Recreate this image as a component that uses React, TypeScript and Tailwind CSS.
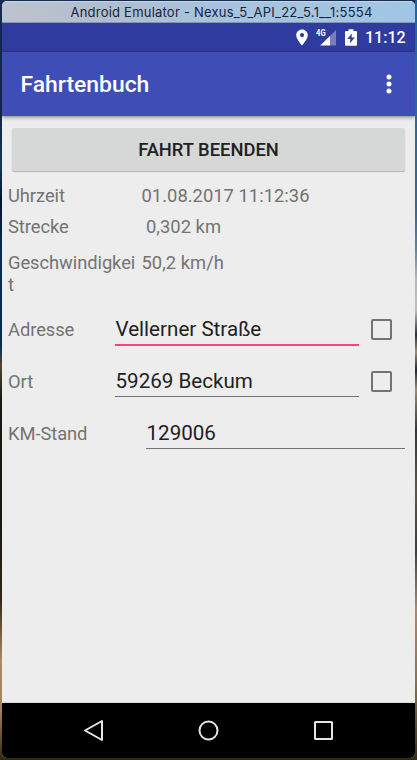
import React from "react";

function StatusIcons() {
  return (
    <>
      <svg className="mr-[8px] h-[17px] w-3" viewBox="0 0 12 17">
        <path
          fillRule="evenodd"
          fill="#fff"
          d="M6 0.4C2.8 0.4 0.2 2.9 0.2 6.1C0.2 10.3 6 16.6 6 16.6S11.8 10.3 11.8 6.1C11.8 2.9 9.2 0.4 6 0.4ZM6 4a2.1 2.1 0 1 1 0 4.2a2.1 2.1 0 0 1 0-4.2Z"
        />
      </svg>
      <span className="relative mr-[9px] h-[17px] w-5">
        <span className="absolute left-0 top-0 origin-left scale-x-[0.85] text-[9px] font-bold leading-[9px]">4G</span>
        <svg className="h-[17px] w-5" viewBox="0 0 20 17">
          <path fill="#fff" fillOpacity="0.35" d="M20 1V16.5H14V7Z" />
          <path fill="#fff" d="M4.2 16.5L14 7V16.5Z" />
        </svg>
      </span>
      <svg className="mr-[8px] h-[17px] w-[12px]" viewBox="0 0 11 17" preserveAspectRatio="none">
        <path
          fillRule="evenodd"
          fill="#fff"
          d="M3.3 0.3H7.7V2H10Q11 2 11 3V15.7Q11 16.7 10 16.7H1Q0 16.7 0 15.7V3Q0 2 1 2H3.3ZM6.4 4.5L2 10H5L4.4 14.5L9 8.5H6Z"
        />
      </svg>
    </>
  );
}

function Checkbox() {
  return <span className="ml-3 h-[21px] w-[21px] rounded-[2px] border-2 border-[#737373]" />;
}

function InfoRow({ label, value, className, valueClass }: { label: string; value: string; className: string; valueClass: string }) {
  return (
    <div className={`flex pl-1.5 ${className}`}>
      <div className="w-[129px] break-all tracking-[-0.07px]">{label}</div>
      <div className={`whitespace-nowrap tracking-[0.03px] ${valueClass}`}>{value}</div>
    </div>
  );
}

function FieldRow({ label, value, focused, children, inputClass }: { label: string; value: string; focused?: boolean; children?: React.ReactNode; inputClass: string }) {
  return (
    <div className="flex h-[52px] items-start pl-1.5">
      <div className="flex h-[29px] items-end whitespace-nowrap leading-[22px] tracking-[-0.07px]">
        <span className="w-0">{label}</span>
      </div>
      <div className={`flex h-[35px] flex-col justify-start pt-[5px] text-[20.6px] leading-6 text-[#212121] ${inputClass}`}>
        <span className="h-[27px] whitespace-nowrap pl-[0.5px]">{value}</span>
        <span className={focused ? "h-0.5 shrink-0 bg-[#ff4081]" : "h-px shrink-0 bg-[#737373]"} />
      </div>
      <div className="flex pt-[7px]">{children}</div>
    </div>
  );
}

export default function App() {
  return (
    <div className="flex h-[760px] w-[417px] bg-[linear-gradient(180deg,#142c4f_0,#12263f_110px,#163757_165px,#08152a_200px,#082c53_250px,#072c55_345px,#51472f_365px,#171915_400px,#171612_520px,#30281a_600px,#a98b64_660px,#a58358_710px,#302613_760px)] pt-px font-['Roboto','Liberation_Sans',sans-serif]">
      <div className="w-[2px]" />
      <div className="flex h-[757px] w-[413px] flex-col overflow-hidden rounded-[5px] bg-[#ededed] text-[18.35px] leading-[21.5px] text-[#737373]">
        <div className="flex h-[22px] items-center justify-center border-b border-[#8198b8] border-t border-t-[#c5d7e8] bg-[linear-gradient(90deg,#bdc3cd_0,#b1bdcd_24%,#a8c2dd_48%,#a0c6e5_100%)] font-['Inter','Roboto',sans-serif] text-[13px] text-[#172536]">
          <span className="relative left-[13px] top-px whitespace-nowrap tracking-[0.22px]">Android Emulator - Nexus_5_API_22_5.1__1:5554</span>
        </div>
        <div className="flex h-[29px] items-center justify-end bg-[#303b9f] pr-[9px] text-[16px] font-medium text-white">
          <StatusIcons />
          <span className="w-[41px] whitespace-nowrap pt-px">11:12</span>
        </div>
        <div className="z-10 flex h-16 shrink-0 items-center justify-between bg-[#3f4eb7] pl-[18.5px] pr-[23px] text-[22.9px] font-medium text-white shadow-[0_1px_4px_rgba(0,0,0,0.5)]">
          <span className="pt-0.5">Fahrtenbuch</span>
          <svg className="h-5 w-[6px]" viewBox="0 0 6 20" fill="#fff">
            <circle cx="3" cy="3" r="2.5" />
            <circle cx="3" cy="10" r="2.5" />
            <circle cx="3" cy="17" r="2.5" />
          </svg>
        </div>
        <main className="flex h-[587px] shrink-0 flex-col border-b border-[#d9d9d9] pt-3">
          <button className="ml-2.5 mr-2.5 flex h-[43px] shrink-0 items-center justify-center rounded-[2px] bg-[#d6d7d7] text-[18.35px] font-medium text-[#212121] shadow-[0_1px_1px_rgba(0,0,0,0.25)]">
            FAHRT BEENDEN
          </button>
          <InfoRow label="Uhrzeit" value="01.08.2017 11:12:36" className="mt-[14px] h-[31px]" valueClass="ml-[4.5px]" />
          <InfoRow label="Strecke" value="0,302 km" className="h-[36px]" valueClass="ml-[9px]" />
          <InfoRow label="Geschwindigkeit" value="50,2 km/h" className="h-[60px]" valueClass="ml-[4.5px]" />
          <FieldRow label="Adresse" value="Vellerner Straße" focused inputClass="ml-[107px] w-[244px]">
            <Checkbox />
          </FieldRow>
          <FieldRow label="Ort" value="59269 Beckum" inputClass="ml-[107px] w-[244px]">
            <Checkbox />
          </FieldRow>
          <FieldRow label="KM-Stand" value="129006" inputClass="ml-[138px] w-[259px]" />
        </main>
        <nav className="flex h-[55px] shrink-0 items-center bg-black">
          <svg className="h-[55px] w-[413px]" viewBox="0 0 413 55" fill="none" stroke="#e5e5e5" strokeWidth="2" strokeLinejoin="round">
            <path d="M83 27.5L100 18V37Z" />
            <circle cx="206.5" cy="27.5" r="9" />
            <rect x="313" y="19" width="17" height="17" rx="0.5" />
          </svg>
        </nav>
      </div>
      <div className="-mt-px h-[760px] w-[2px] bg-[linear-gradient(180deg,#1668a3_0,#2d6794_100px,#346893_210px,#65829c_250px,#b7b8bd_280px,#c0bcba_310px,#29313b_335px,#a08d6a_352px,#202936_370px,#9e8b68_390px,#34373a_430px,#605542_490px,#3e3f3e_550px,#aa8a6e_610px,#8e734d_680px,#372c17_760px)]" />
    </div>
  );
}
